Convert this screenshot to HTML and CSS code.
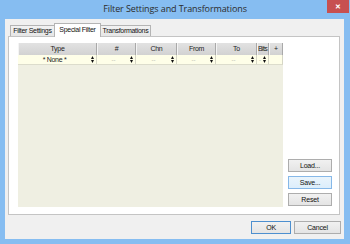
FILE: index.html
```html
<!DOCTYPE html>
<html lang="en">
<head>
    <meta charset="UTF-8">
    <title>Filter Settings and Transformations</title>
    <link rel="stylesheet" href="styles.css">
</head>
<body>
    <div class="window">
        <div class="titlebar">
            <span></span>
            <span class="title">Filter Settings and Transformations</span>
            <span class="close">&#x2715;</span>
        </div>
        <div class="client">
            <div class="tabs">
                <div class="tab tab-first">Filter Settings</div>
                <div class="tab active">Special Filter</div>
                <div class="tab tab-last">Transformations</div>
            </div>
            <div class="panel">
                <div class="grid">
                    <div class="head">Type</div>
                    <div class="head">#</div>
                    <div class="head">Chn</div>
                    <div class="head">From</div>
                    <div class="head">To</div>
                    <div class="head head-tight">Bits</div>
                    <div class="head">+</div>

                    <div class="cell"><span class="val val-type">* None *</span><svg class="spin" viewBox="0 0 3 7"><path d="M0 3L1.5 0L3 3ZM0 4L3 4L1.5 7Z"/></svg></div>
                    <div class="cell"><span class="val">--</span><svg class="spin" viewBox="0 0 3 7"><path d="M0 3L1.5 0L3 3ZM0 4L3 4L1.5 7Z"/></svg></div>
                    <div class="cell"><span class="val">--</span><svg class="spin" viewBox="0 0 3 7"><path d="M0 3L1.5 0L3 3ZM0 4L3 4L1.5 7Z"/></svg></div>
                    <div class="cell"><span class="val">--</span><svg class="spin" viewBox="0 0 3 7"><path d="M0 3L1.5 0L3 3ZM0 4L3 4L1.5 7Z"/></svg></div>
                    <div class="cell"><span class="val">--</span><svg class="spin" viewBox="0 0 3 7"><path d="M0 3L1.5 0L3 3ZM0 4L3 4L1.5 7Z"/></svg></div>
                    <div class="cell"><span class="val">-</span><svg class="spin" viewBox="0 0 3 7"><path d="M0 3L1.5 0L3 3ZM0 4L3 4L1.5 7Z"/></svg></div>
                    <div class="cell"></div>
                </div>
                <div class="side">
                    <button class="btn">Load...</button>
                    <button class="btn btn-hot">Save...</button>
                    <button class="btn">Reset</button>
                </div>
            </div>
            <div class="footer">
                <button class="btn btn-ok">OK</button>
                <button class="btn btn-cancel">Cancel</button>
            </div>
        </div>
    </div>
</body>
</html>
```

FILE: styles.css
```css
body {
    margin: 0;
    font-family: "Liberation Sans", Arial, sans-serif;
}

.window {
    width: 350px;
    height: 244px;
    background-color: #86bdf1;
    display: flex;
    flex-direction: column;
}

.titlebar {
    height: 19px;
    display: grid;
    grid-template-columns: 1fr auto 1fr;
    align-items: start;
}

.title {
    font-family: "Open Sans", sans-serif;
    font-size: 9px;
    color: #2b2b2b;
    line-height: 18px;
    letter-spacing: -0.1px;
}

.close {
    justify-self: end;
    width: 22px;
    height: 13px;
    margin-right: 1px;
    background-color: #c75050;
    color: white;
    font-size: 7px;
    font-weight: bold;
    text-align: center;
    line-height: 13px;
}

.client {
    flex: 1;
    margin: 0 6px 5px 5px;
    background-color: #f0f0f0;
    display: flex;
    flex-direction: column;
    padding-top: 4px;
}

.tabs {
    display: flex;
    align-items: flex-end;
    height: 13px;
    padding-left: 5px;
    position: relative;
    z-index: 1;
}

.tab {
    height: 11px;
    box-sizing: border-box;
    border: 1px solid #b4b4b4;
    border-bottom: none;
    background: linear-gradient(#f2f2f2, #e6e6e6);
    font-size: 7px;
    letter-spacing: -0.3px;
    color: #111;
    line-height: 10px;
    text-align: center;
}

.tab-first {
    width: 44px;
    border-right: none;
}

.tab-last {
    width: 50px;
    border-left: none;
}

.tab.active {
    width: 47px;
    height: 14px;
    margin-bottom: -1px;
    background: white;
    line-height: 12px;
}

.panel {
    margin-left: 3px;
    width: 332px;
    height: 179px;
    box-sizing: border-box;
    background-color: white;
    border: 1px solid #c4c4c4;
    display: flex;
    padding: 6px 7px 7px 9px;
}

.grid {
    width: 265px;
    background-color: #efefe2;
    display: grid;
    grid-template-columns: 79px 39px 41px 39px 41px 12px 14px;
    grid-template-rows: 12px 10px;
    align-content: start;
}

.head {
    background: linear-gradient(#e2e2e2, #d2d2d2);
    border-left: 1px solid #f4f4f4;
    border-right: 1px solid #a9a9a9;
    font-size: 7px;
    letter-spacing: -0.3px;
    color: #1e1e1e;
    text-align: center;
    line-height: 12px;
    overflow: hidden;
}

.head-tight {
    letter-spacing: -0.6px;
    text-align: left;
}

.cell {
    background-color: #fefee8;
    border-right: 1px solid #d6d6c6;
    border-bottom: 1px solid #dcdccc;
    display: flex;
    align-items: center;
    font-size: 6px;
    color: #b0b0a8;
    padding-right: 2px;
}

.val {
    flex: 1;
    text-align: center;
}

.val-type {
    color: #222;
    font-size: 7px;
    letter-spacing: -0.3px;
}

.spin {
    width: 3px;
    height: 7px;
    fill: #111;
}

.side {
    margin-left: 5px;
    width: 44px;
    display: flex;
    flex-direction: column;
    justify-content: flex-end;
    gap: 4px;
    padding-bottom: 1px;
}

.btn {
    height: 13px;
    padding: 0;
    box-sizing: border-box;
    border: 1px solid #adadad;
    background: linear-gradient(#f1f1f1, #e4e4e4);
    font-family: "Liberation Sans", Arial, sans-serif;
    font-size: 7px;
    letter-spacing: -0.2px;
    color: #111;
    line-height: 11px;
}

.btn-hot {
    border-color: #86b8e8;
    background: linear-gradient(#eaf4fc, #dceefb);
}

.footer {
    display: flex;
    justify-content: flex-end;
    gap: 3px;
    padding: 6px 3px 0 0;
}

.btn-ok {
    width: 40px;
    border-color: #4d8fcf;
}

.btn-cancel {
    width: 47px;
}
```
